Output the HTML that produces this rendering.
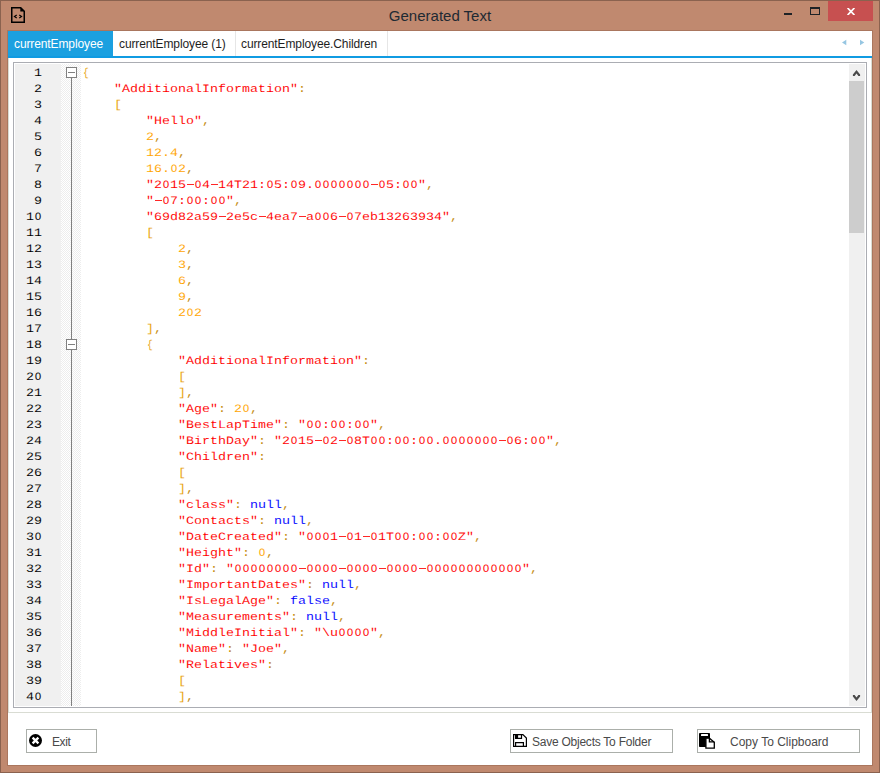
<!DOCTYPE html>
<html><head><meta charset="utf-8">
<style>
*{margin:0;padding:0;box-sizing:border-box}
html,body{width:880px;height:773px;overflow:hidden}
body{position:relative;background:#C0896F;font-family:"Liberation Sans",sans-serif}
.abs{position:absolute}
#frame{left:0;top:0;width:880px;height:773px;border:1px solid #8A624F}
#title{left:0;top:6px;width:880px;text-align:center;font-size:15px;color:#1E2A33;line-height:20px}
#close{left:828px;top:1px;width:45px;height:20px;background:#C75050}
#client{left:8px;top:31px;width:864px;height:734px;background:#fff;box-shadow:0 0 0 1px #AA765E}
#tabsel{left:8px;top:31px;width:105px;height:27px;background:#1BA0E0}
#tabline{left:8px;top:56px;width:864px;height:2px;background:#109BE2}
.tab{top:36px;font-size:12px;letter-spacing:-0.11px;line-height:16px;white-space:nowrap;color:#1E1E1E}
.sep{top:31px;width:1px;height:25px;background:#E6E6E6}
#lborder{left:8px;top:58px;width:1px;height:655px;background:#D9DCD3}
#rborder{left:871px;top:58px;width:1px;height:655px;background:#D9DCD3}
#bborder{left:8px;top:712px;width:864px;height:1px;background:#D9DCD3}
#editor{left:13px;top:62px;width:854px;height:646px;border:1px solid #ABADB3;background:#fff}
#gnum{left:15px;top:64px;width:46px;height:642px;background:#F0F0F0}
#hatch{left:61px;top:64px;width:20px;height:642px;
 background-color:#fff;
 background-image:linear-gradient(45deg,#EDEDED 25%,transparent 25%,transparent 75%,#EDEDED 75%),linear-gradient(45deg,#EDEDED 25%,transparent 25%,transparent 75%,#EDEDED 75%);
 background-size:2px 2px;background-position:0 0,1px 1px}
#foldline{left:71px;top:78px;width:1px;height:628px;background:#808080}
.fold{left:66px;width:11px;height:11px;border:1px solid #808080;background:#fff}
.fold::after{content:"";position:absolute;left:1px;top:4px;width:7px;height:1px;background:#808080}
.mono{font-family:"Liberation Mono",monospace;font-size:13.333px;line-height:16px;white-space:pre;text-rendering:geometricPrecision}
.ln{height:16px;transform:scaleY(0.85);transform-origin:0 12px}
#nums{left:15px;top:66px;width:27px;text-align:right;color:#000;-webkit-text-stroke:0.06px #F0F0F0}
#code{left:82px;top:66px;color:#000;-webkit-text-stroke:0.06px #fff}
i{font-style:normal}
.z{font-weight:normal;display:inline-block;transform:scaleX(0.82);transform-origin:50% 12px}
.s{color:#FF0000}
.n{color:#FFA500}
.k{color:#0000FF}
.b{color:#E8A208}
.dh{display:inline-block;width:8px;height:16px;vertical-align:top;position:relative}
.dh::after{content:"";position:absolute;left:1px;width:7px;top:4.94px;height:1.18px;background:currentColor}
.cb{display:inline-block;transform:scaleX(0.72);transform-origin:50% 12px}
.p{color:#C48A08}
#sb{left:849px;top:64px;width:16px;height:642px;background:#F0F0F0}
#thumb{left:849px;top:81px;width:15px;height:152px;background:#CDCDCD}
.btn{top:729px;height:24px;border:1px solid #ABAFAA;background:#fff}
.btxt{top:735px;font-size:12px;line-height:14px;color:#4A4A4A;white-space:nowrap}
</style></head><body>
<div id="frame" class="abs"></div>
<svg class="abs" style="left:11px;top:7px" width="14" height="16" viewBox="0 0 14 16">
 <path d="M0.75 0.75 H9.7 L13.25 4.3 V15.25 H0.75 Z" fill="none" stroke="#000" stroke-width="1.5"/>
 <path d="M9.3 0 V4.6 H14 Z" fill="#000"/>
 <path d="M5.7 8.1 L3.5 9.6 L5.7 11.1 M8.3 8.1 L10.5 9.6 L8.3 11.1" fill="none" stroke="#000" stroke-width="1.2"/>
</svg>
<div id="title" class="abs">Generated Text</div>
<div class="abs" style="left:784px;top:13px;width:8px;height:2px;background:#1E2226"></div>
<div class="abs" style="left:810px;top:7px;width:10px;height:8px;border:1px solid #1E2226;border-top-width:2px"></div>
<div id="close" class="abs"></div>
<svg class="abs" style="left:846px;top:8px" width="10" height="7" viewBox="0 0 10 7"><path d="M1.6 0 L8.4 7 M8.4 0 L1.6 7" stroke="#fff" stroke-width="1.75"/></svg>
<div id="client" class="abs"></div>
<div id="tabsel" class="abs"></div>
<div id="tabline" class="abs"></div>
<div class="abs tab" style="left:14px;color:#fff">currentEmployee</div>
<div class="abs tab" style="left:119px">currentEmployee (1)</div>
<div class="abs tab" style="left:241px">currentEmployee.Children</div>
<div class="abs sep" style="left:235px"></div>
<div class="abs sep" style="left:387px"></div>
<svg class="abs" style="left:840px;top:38px" width="30" height="10"><path d="M6.3 1.8 V7.2 L2 4.5 Z M20 1.8 L24.3 4.5 L20 7.2 Z" fill="#96C6E2"/></svg>
<div id="lborder" class="abs"></div><div id="rborder" class="abs"></div>
<div id="bborder" class="abs"></div>
<div id="editor" class="abs"></div>
<div id="gnum" class="abs"></div>
<div id="hatch" class="abs"></div>
<div id="foldline" class="abs"></div>
<div class="abs fold" style="top:67px"></div>
<div class="abs fold" style="top:339px"></div>
<div id="nums" class="abs mono"><div class="ln">1</div><div class="ln">2</div><div class="ln">3</div><div class="ln">4</div><div class="ln">5</div><div class="ln">6</div><div class="ln">7</div><div class="ln">8</div><div class="ln">9</div><div class="ln">1<b class="z">O</b></div><div class="ln">11</div><div class="ln">12</div><div class="ln">13</div><div class="ln">14</div><div class="ln">15</div><div class="ln">16</div><div class="ln">17</div><div class="ln">18</div><div class="ln">19</div><div class="ln">2<b class="z">O</b></div><div class="ln">21</div><div class="ln">22</div><div class="ln">23</div><div class="ln">24</div><div class="ln">25</div><div class="ln">26</div><div class="ln">27</div><div class="ln">28</div><div class="ln">29</div><div class="ln">3<b class="z">O</b></div><div class="ln">31</div><div class="ln">32</div><div class="ln">33</div><div class="ln">34</div><div class="ln">35</div><div class="ln">36</div><div class="ln">37</div><div class="ln">38</div><div class="ln">39</div><div class="ln">4<b class="z">O</b></div></div>
<div id="code" class="abs mono"><div class="ln"><i class="b cb">{</i></div><div class="ln">    <i class="s">&quot;AdditionalInformation&quot;</i><i class="p">:</i></div><div class="ln">    <i class="b">[</i></div><div class="ln">        <i class="s">&quot;Hello&quot;</i><i class="p">,</i></div><div class="ln">        <i class="n">2</i><i class="p">,</i></div><div class="ln">        <i class="n">12.4</i><i class="p">,</i></div><div class="ln">        <i class="n">16.<b class="z">O</b>2</i><i class="p">,</i></div><div class="ln">        <i class="s">&quot;2<b class="z">O</b>15<b class="dh"></b><b class="z">O</b>4<b class="dh"></b>14T21:<b class="z">O</b>5:<b class="z">O</b>9.<b class="z">O</b><b class="z">O</b><b class="z">O</b><b class="z">O</b><b class="z">O</b><b class="z">O</b><b class="z">O</b><b class="dh"></b><b class="z">O</b>5:<b class="z">O</b><b class="z">O</b>&quot;</i><i class="p">,</i></div><div class="ln">        <i class="s">&quot;<b class="dh"></b><b class="z">O</b>7:<b class="z">O</b><b class="z">O</b>:<b class="z">O</b><b class="z">O</b>&quot;</i><i class="p">,</i></div><div class="ln">        <i class="s">&quot;69d82a59<b class="dh"></b>2e5c<b class="dh"></b>4ea7<b class="dh"></b>a<b class="z">O</b><b class="z">O</b>6<b class="dh"></b><b class="z">O</b>7eb13263934&quot;</i><i class="p">,</i></div><div class="ln">        <i class="b">[</i></div><div class="ln">            <i class="n">2</i><i class="p">,</i></div><div class="ln">            <i class="n">3</i><i class="p">,</i></div><div class="ln">            <i class="n">6</i><i class="p">,</i></div><div class="ln">            <i class="n">9</i><i class="p">,</i></div><div class="ln">            <i class="n">2<b class="z">O</b>2</i></div><div class="ln">        <i class="b">]</i><i class="p">,</i></div><div class="ln">        <i class="b cb">{</i></div><div class="ln">            <i class="s">&quot;AdditionalInformation&quot;</i><i class="p">:</i></div><div class="ln">            <i class="b">[</i></div><div class="ln">            <i class="b">]</i><i class="p">,</i></div><div class="ln">            <i class="s">&quot;Age&quot;</i><i class="p">:</i> <i class="n">2<b class="z">O</b></i><i class="p">,</i></div><div class="ln">            <i class="s">&quot;BestLapTime&quot;</i><i class="p">:</i> <i class="s">&quot;<b class="z">O</b><b class="z">O</b>:<b class="z">O</b><b class="z">O</b>:<b class="z">O</b><b class="z">O</b>&quot;</i><i class="p">,</i></div><div class="ln">            <i class="s">&quot;BirthDay&quot;</i><i class="p">:</i> <i class="s">&quot;2<b class="z">O</b>15<b class="dh"></b><b class="z">O</b>2<b class="dh"></b><b class="z">O</b>8T<b class="z">O</b><b class="z">O</b>:<b class="z">O</b><b class="z">O</b>:<b class="z">O</b><b class="z">O</b>.<b class="z">O</b><b class="z">O</b><b class="z">O</b><b class="z">O</b><b class="z">O</b><b class="z">O</b><b class="z">O</b><b class="dh"></b><b class="z">O</b>6:<b class="z">O</b><b class="z">O</b>&quot;</i><i class="p">,</i></div><div class="ln">            <i class="s">&quot;Children&quot;</i><i class="p">:</i></div><div class="ln">            <i class="b">[</i></div><div class="ln">            <i class="b">]</i><i class="p">,</i></div><div class="ln">            <i class="s">&quot;class&quot;</i><i class="p">:</i> <i class="k">null</i><i class="p">,</i></div><div class="ln">            <i class="s">&quot;Contacts&quot;</i><i class="p">:</i> <i class="k">null</i><i class="p">,</i></div><div class="ln">            <i class="s">&quot;DateCreated&quot;</i><i class="p">:</i> <i class="s">&quot;<b class="z">O</b><b class="z">O</b><b class="z">O</b>1<b class="dh"></b><b class="z">O</b>1<b class="dh"></b><b class="z">O</b>1T<b class="z">O</b><b class="z">O</b>:<b class="z">O</b><b class="z">O</b>:<b class="z">O</b><b class="z">O</b>Z&quot;</i><i class="p">,</i></div><div class="ln">            <i class="s">&quot;Height&quot;</i><i class="p">:</i> <i class="n"><b class="z">O</b></i><i class="p">,</i></div><div class="ln">            <i class="s">&quot;Id&quot;</i><i class="p">:</i> <i class="s">&quot;<b class="z">O</b><b class="z">O</b><b class="z">O</b><b class="z">O</b><b class="z">O</b><b class="z">O</b><b class="z">O</b><b class="z">O</b><b class="dh"></b><b class="z">O</b><b class="z">O</b><b class="z">O</b><b class="z">O</b><b class="dh"></b><b class="z">O</b><b class="z">O</b><b class="z">O</b><b class="z">O</b><b class="dh"></b><b class="z">O</b><b class="z">O</b><b class="z">O</b><b class="z">O</b><b class="dh"></b><b class="z">O</b><b class="z">O</b><b class="z">O</b><b class="z">O</b><b class="z">O</b><b class="z">O</b><b class="z">O</b><b class="z">O</b><b class="z">O</b><b class="z">O</b><b class="z">O</b><b class="z">O</b>&quot;</i><i class="p">,</i></div><div class="ln">            <i class="s">&quot;ImportantDates&quot;</i><i class="p">:</i> <i class="k">null</i><i class="p">,</i></div><div class="ln">            <i class="s">&quot;IsLegalAge&quot;</i><i class="p">:</i> <i class="k">false</i><i class="p">,</i></div><div class="ln">            <i class="s">&quot;Measurements&quot;</i><i class="p">:</i> <i class="k">null</i><i class="p">,</i></div><div class="ln">            <i class="s">&quot;MiddleInitial&quot;</i><i class="p">:</i> <i class="s">&quot;\u<b class="z">O</b><b class="z">O</b><b class="z">O</b><b class="z">O</b>&quot;</i><i class="p">,</i></div><div class="ln">            <i class="s">&quot;Name&quot;</i><i class="p">:</i> <i class="s">&quot;Joe&quot;</i><i class="p">,</i></div><div class="ln">            <i class="s">&quot;Relatives&quot;</i><i class="p">:</i></div><div class="ln">            <i class="b">[</i></div><div class="ln">            <i class="b">]</i><i class="p">,</i></div></div>
<div id="sb" class="abs"></div>
<div id="thumb" class="abs"></div>
<svg class="abs" style="left:852px;top:69px" width="10" height="8"><path d="M4.5 0.9 L8.1 5.5 L8.1 7 L6.4 7 L4.5 4.4 L2.6 7 L0.9 7 L0.9 5.5 Z" fill="#4A4A4A"/></svg>
<svg class="abs" style="left:852px;top:694px" width="10" height="8"><path d="M4.5 7.1 L8.1 2.5 L8.1 1 L6.4 1 L4.5 3.6 L2.6 1 L0.9 1 L0.9 2.5 Z" fill="#4A4A4A"/></svg>
<div class="abs btn" style="left:26px;width:71px"></div>
<svg class="abs" style="left:29px;top:734px" width="13" height="13" viewBox="0 0 13 13"><circle cx="6.5" cy="6.5" r="6.5" fill="#000"/><path d="M3.6 3.6 L9.4 9.4 M9.4 3.6 L3.6 9.4" stroke="#fff" stroke-width="2.3"/></svg>
<div class="abs btxt" style="left:52px;letter-spacing:-0.4px">Exit</div>
<div class="abs btn" style="left:510px;width:163px"></div>
<svg class="abs" style="left:513px;top:734px" width="14" height="13" viewBox="0 0 14 13"><path d="M0.6 0.6 H9.9 L13.4 4.1 V12.4 H0.6 Z" fill="none" stroke="#000" stroke-width="1.2"/><path d="M2.6 0.5 V4.3 H8.5 V0.5" fill="none" stroke="#000" stroke-width="1.2"/><rect x="2.4" y="0.5" width="2.7" height="3.6" fill="#000"/><path d="M2.6 12.5 V8.7 H10.4 V12.5" fill="none" stroke="#000" stroke-width="1.2"/></svg>
<div class="abs btxt" style="left:532px;letter-spacing:-0.24px">Save Objects To Folder</div>
<div class="abs btn" style="left:697px;width:163px"></div>
<svg class="abs" style="left:696px;top:728px" width="24" height="24" viewBox="0 0 24 24"><rect x="3" y="5" width="11" height="14" rx="0.8" fill="#000"/><rect x="5" y="6" width="7" height="2" rx="0.5" fill="#fff"/><path d="M9.9 10.2 H13.4 L18.3 14.3 V20.2 H9.9 Z" fill="#fff" stroke="#000" stroke-width="1.3"/><path d="M13.4 10.2 V13.9 H18.3" fill="none" stroke="#000" stroke-width="1.3"/></svg>
<div class="abs btxt" style="left:730px;letter-spacing:0px">Copy To Clipboard</div>
</body></html>
